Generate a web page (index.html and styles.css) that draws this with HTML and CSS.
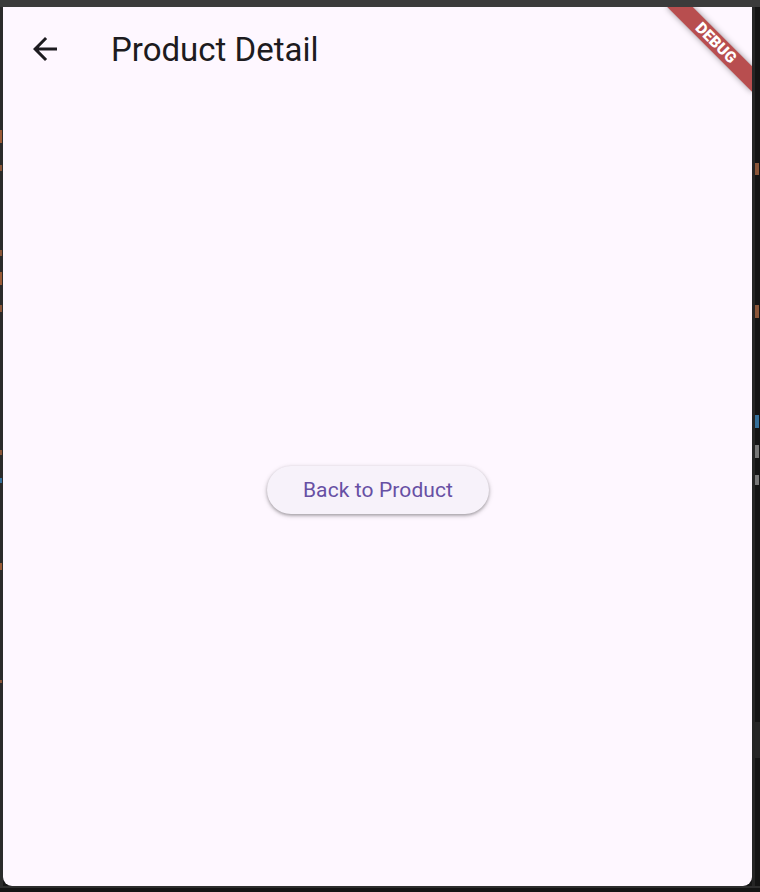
FILE: index.html
```
<!DOCTYPE html>
<html lang="en">
<head>
<meta charset="utf-8">
<title>Product Detail</title>
<link rel="stylesheet" href="styles.css">
</head>
<body>
<div class="screen">
  <div class="topbar"></div>
  <div class="middle">
    <div class="edge-left"></div>
    <div class="window">
      <header class="appbar">
        <div class="leading">
          <svg class="back-icon" viewBox="0 0 24 24" width="36" height="36" aria-hidden="true">
            <path d="M20 11H7.83l5.59-5.59L12 4l-8 8 8 8 1.41-1.41L7.83 13H20v-2z" fill="#1d1b20"/>
          </svg>
        </div>
        <h1 class="title">Product Detail</h1>
      </header>
      <main class="body">
        <button class="elevated">Back to Product</button>
      </main>
      <div class="debug-banner"><span>DEBUG</span></div>
    </div>
    <div class="edge-right">
      <span class="edge-inner"></span>
      <span class="edge-code"></span>
    </div>
  </div>
  <div class="bottombar"></div>
</div>
</body>
</html>
```
FILE: styles.css
```
html, body {
  margin: 0;
  padding: 0;
}
body {
  width: 760px;
  height: 892px;
  overflow: hidden;
  background: #161616;
  font-family: Roboto, "Noto Sans", "Liberation Sans", sans-serif;
}
.screen {
  display: flex;
  flex-direction: column;
  width: 760px;
  height: 892px;
}
.topbar {
  height: 7px;
  background: #3b3b3b;
  flex: none;
}
.middle {
  display: flex;
  height: 879px;
  flex: none;
  background: #161616;
}
.edge-left {
  width: 3px;
  flex: none;
  background:
    linear-gradient(to bottom,
      transparent 0 123px,
      #9a5a36 123px 136px, transparent 136px 158px,
      #8a5538 158px 164px, transparent 164px 243px,
      #8a5538 243px 249px, transparent 249px 265px,
      #9a5a36 265px 278px, transparent 278px 298px,
      #8a5538 298px 305px, transparent 305px 443px,
      #8a5538 443px 448px, transparent 448px 471px,
      #356f99 471px 476px, transparent 476px 556px,
      #9a5a36 556px 563px, transparent 563px 673px,
      #8a5538 673px 676px, transparent 676px) 0 0 / 2px 100% no-repeat,
    #2b2b2b;
}
.window {
  position: relative;
  width: 749px;
  flex: none;
  background: #fef7ff;
  border-radius: 0 0 9px 9px;
  overflow: hidden;
  display: flex;
  flex-direction: column;
}
.appbar {
  height: 84px;
  flex: none;
  display: flex;
  align-items: center;
}
.leading {
  width: 84px;
  height: 84px;
  display: flex;
  align-items: center;
  justify-content: center;
  flex: none;
}
.back-icon {
  display: block;
}
.title {
  margin: 0 0 0 24px;
  font-size: 33px;
  font-weight: 400;
  color: #1d1b20;
  line-height: 42px;
  padding-top: 1px;
}
.body {
  flex: 1;
  display: flex;
  align-items: center;
  justify-content: center;
  padding-top: 2px;
}
.elevated {
  height: 48px;
  padding: 0 36px;
  border: none;
  border-radius: 24px;
  background: #f7f2fa;
  color: #6750a4;
  font-family: Roboto, "Noto Sans", "Liberation Sans", sans-serif;
  font-size: 21px;
  font-weight: 400;
  letter-spacing: 0.1px;
  box-shadow: 0 1.5px 3px rgba(0, 0, 0, 0.28), 0 1.5px 4.5px 1.5px rgba(0, 0, 0, 0.1);
  margin-left: 1px;
}
.debug-banner {
  position: absolute;
  top: 27px;
  right: -24px;
  width: 120px;
  height: 18px;
  transform: rotate(45deg);
  background: rgba(168, 40, 40, 0.82);
  box-shadow: 0 0 6px rgba(0, 0, 0, 0.4);
  display: flex;
  align-items: center;
  justify-content: center;
}
.debug-banner span {
  color: #ffffff;
  font-family: Roboto, "Liberation Sans", sans-serif;
  font-weight: 900;
  font-size: 15.5px;
  line-height: 15px;
  letter-spacing: 0.2px;
}
.edge-right {
  flex: none;
  width: 8px;
  display: flex;
}
.edge-inner {
  width: 3px;
  background: #252525;
}
.edge-code {
  width: 5px;
  background:
    linear-gradient(to bottom,
      transparent 0 156px,
      #8a5538 156px 168px, transparent 168px 298px,
      #8a5538 298px 311px, transparent 311px 408px,
      #356f99 408px 421px, transparent 421px 438px,
      #777777 438px 451px, transparent 451px 468px,
      #777777 468px 478px, transparent 478px) 0 0 / 4px 100% no-repeat,
    linear-gradient(to bottom, transparent 0 715px, #252525 715px 751px, transparent 751px),
    #141414;
}
.bottombar {
  flex: none;
  height: 6px;
  background: linear-gradient(to bottom, #2e2e2e 0 2px, #141414 2px);
}
```
